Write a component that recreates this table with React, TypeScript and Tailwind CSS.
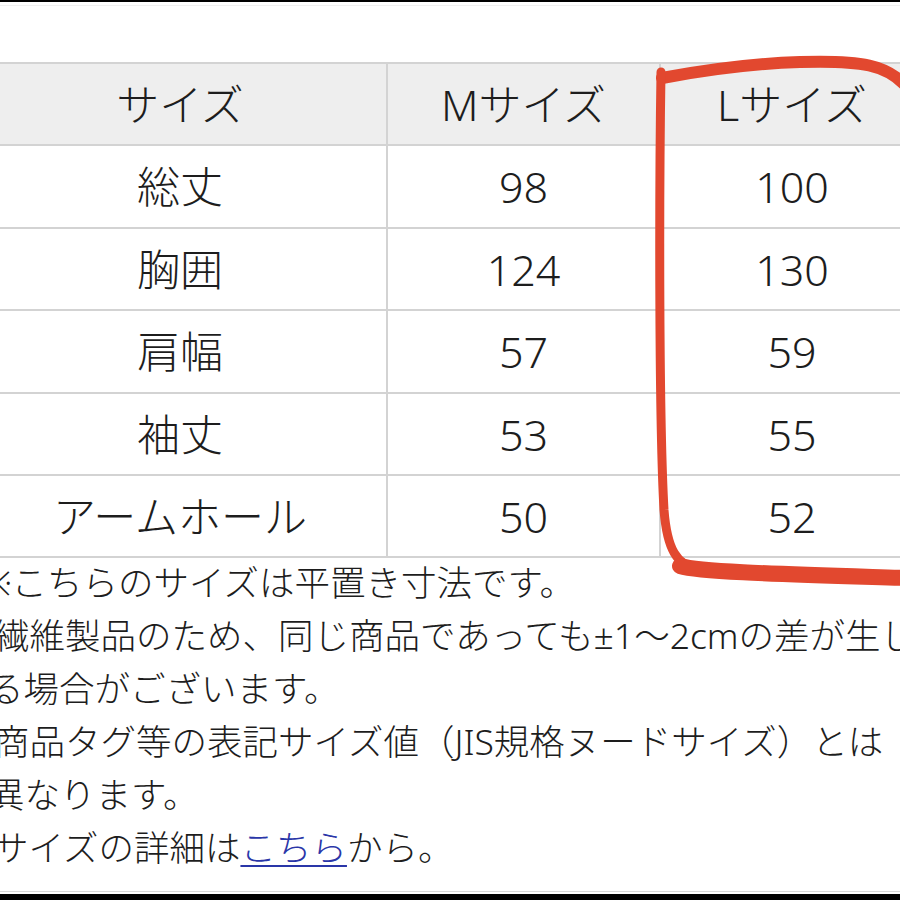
const rows = [
  { label: "総丈", m: "98", l: "100" },
  { label: "胸囲", m: "124", l: "130" },
  { label: "肩幅", m: "57", l: "59" },
  { label: "袖丈", m: "53", l: "55" },
  { label: "アームホール", m: "50", l: "52" },
];

const rowHeights = ["h-[83px]", "h-[82px]", "h-[83px]", "h-[82px]", "h-[82px]"];

function Cell({ children, last }: { children: React.ReactNode; last?: boolean }) {
  return (
    <div
      className={
        "flex items-center justify-center " +
        (last ? "" : "border-r-2 border-[#d3d3d3]")
      }
    >
      {children}
    </div>
  );
}

export default function App() {
  return (
    <div className="relative w-[900px] h-[900px] overflow-hidden bg-white text-[#1d1d1d] font-light font-['Noto_Sans','Noto_Sans_CJK_JP',sans-serif] flex flex-col">
      <div className="h-[2px] bg-black" />
      <div className="h-px mt-[3px] bg-[#f0f0f0]" />
      <div className="h-[56px]" />

      {/* size table */}
      <div className="-ml-[26px] w-[949px] border-t-2 border-[#d3d3d3] text-[43px] leading-none">
        <div className="grid grid-cols-[414px_273px_262px] h-[82px] bg-[#eeeeee] border-b-2 border-[#d3d3d3]">
          <Cell>サイズ</Cell>
          <Cell>Mサイズ</Cell>
          <Cell last>Lサイズ</Cell>
        </div>
        {rows.map((r, i) => (
          <div
            key={r.label}
            className={"grid grid-cols-[414px_273px_262px] border-b-2 border-[#d3d3d3] " + rowHeights[i]}
          >
            <Cell>{r.label}</Cell>
            <Cell>{r.m}</Cell>
            <Cell last>{r.l}</Cell>
          </div>
        ))}
      </div>

      {/* notes */}
      <div className="-mt-[2px] text-[35.5px] leading-[53px] whitespace-nowrap">
        <div className="-ml-[18px]">※こちらのサイズは平置き寸法です。</div>
        <div className="-ml-[6px]">繊維製品のため、同じ商品であっても±1～2cmの差が生じ</div>
        <div className="-ml-[12px]">る場合がございます。</div>
        <div className="-ml-[6px]">商品タグ等の表記サイズ値（JIS規格ヌードサイズ）とは</div>
        <div className="-ml-[11px]">異なります。</div>
        <div className="-ml-[7px]">
          サイズの詳細は<span className="text-[#2a36a8] underline decoration-2 underline-offset-4">こちら</span>から。
        </div>
      </div>

      <div className="mt-auto h-px bg-[#d8d8d8]" />
      <div className="h-[2px]" />
      <div className="h-[6px] bg-black" />

      {/* hand drawn red marker */}
      <svg className="absolute inset-0 pointer-events-none" width="900" height="900" viewBox="0 0 900 900">
        <path
          d="M 904 84 C 886 66, 864 60, 800 62 C 740 64, 694 72, 662 78"
          fill="none"
          stroke="#e2482f"
          strokeWidth="12"
          strokeLinecap="round"
        />
        <path
          d="M 661 72 C 659 200, 659 420, 664 510 C 667 548, 676 566, 700 570 C 760 572, 840 574, 905 577"
          fill="none"
          stroke="#e2482f"
          strokeWidth="9"
          strokeLinecap="round"
        />
        <path
          d="M 680 566 C 700 572, 780 574, 905 578"
          fill="none"
          stroke="#e2482f"
          strokeWidth="16"
          strokeLinecap="round"
        />
      </svg>
    </div>
  );
}
